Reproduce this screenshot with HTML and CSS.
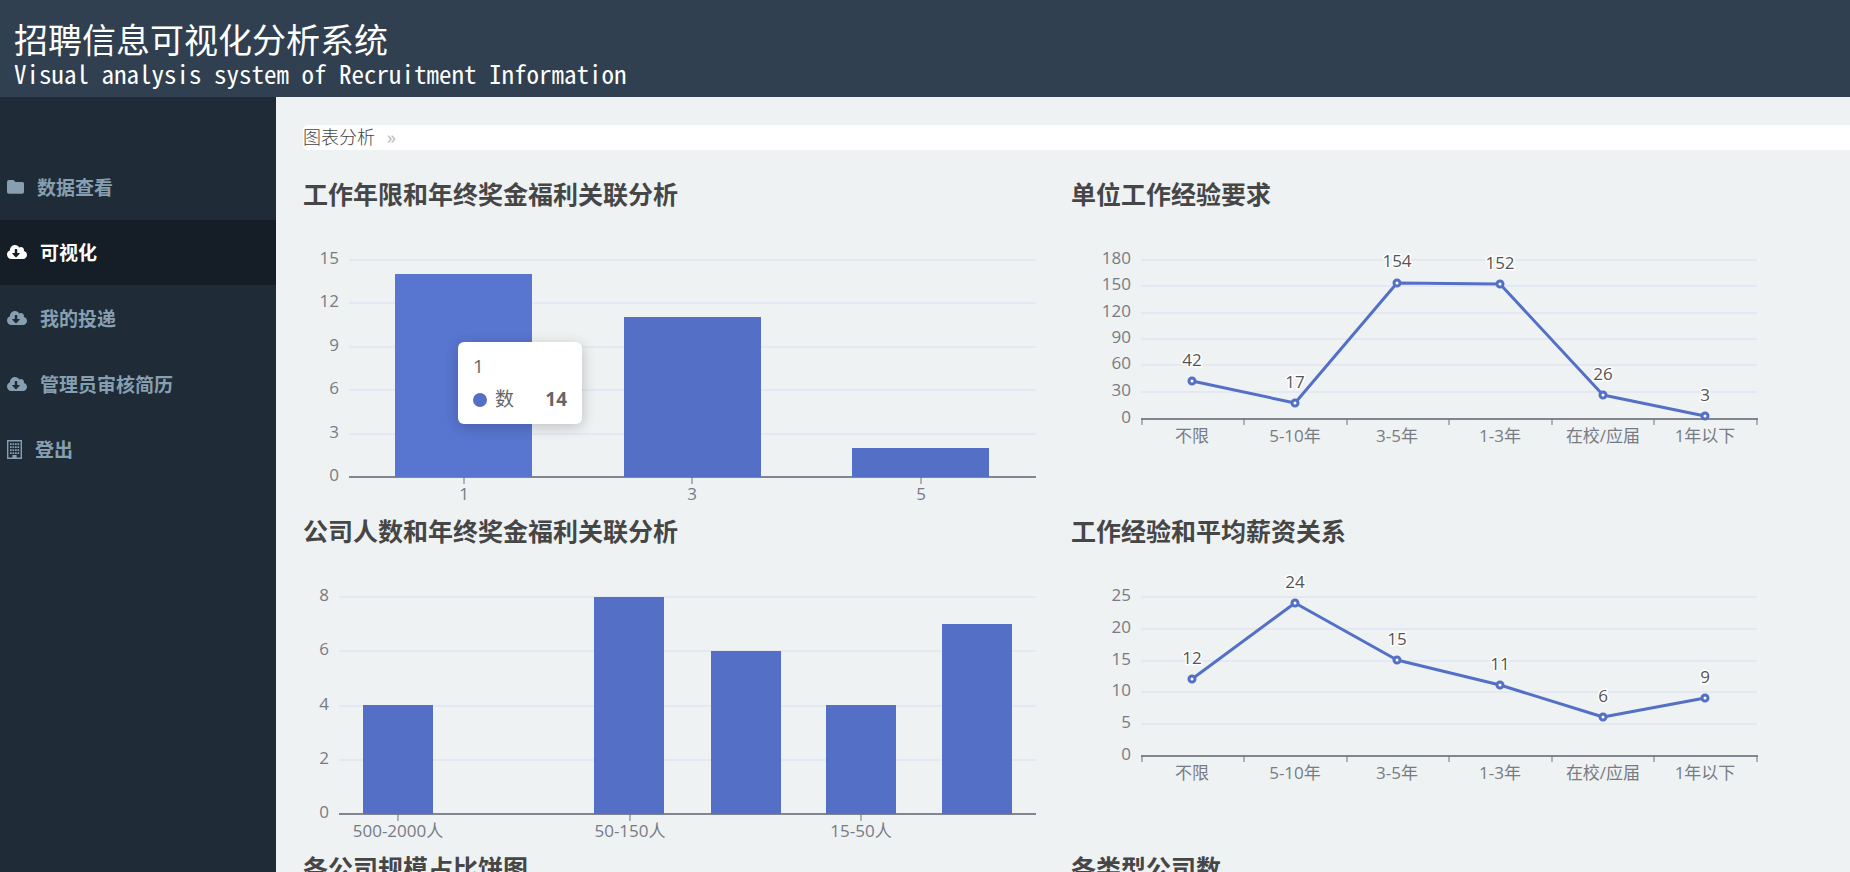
FILE: index.html
```html
<!DOCTYPE html>
<html lang="zh-CN">
<head>
<meta charset="utf-8">
<title>招聘信息可视化分析系统</title>
<link rel="stylesheet" href="styles.css">
</head>
<body>
<header class="banner">
  <h1 class="banner-title">招聘信息可视化分析系统</h1>
  <p class="banner-subtitle">Visual analysis system of Recruitment Information</p>
</header>
<div class="layout">
  <nav class="sidebar">
    <ul class="menu">
      <li><a class="menu-link" href="#"><svg class="icon" width="17" height="15" viewBox="0 0 17 15"><path d="M2 1h4.500l2 2H15.500a1.500 1.500 0 0 1 1.500 1.500V13a1.800 1.800 0 0 1-1.800 1.800H1.800A1.800 1.800 0 0 1 0 13V3a2 2 0 0 1 2-2z"/></svg><span>数据查看</span></a></li>
      <li><a class="menu-link active" href="#"><svg class="icon" width="20" height="16" viewBox="0 0 640 512"><path d="M537.600 226.600c4.100-10.700 6.400-22.400 6.400-34.600 0-53-43-96-96-96-19.700 0-38.100 6-53.300 16.200C367 64.200 315.300 32 256 32c-88.400 0-160 71.600-160 160 0 2.700.1 5.400.2 8.100C40.200 219.800 0 273.200 0 336c0 79.500 64.500 144 144 144h368c70.700 0 128-57.300 128-128 0-61.900-44-113.600-102.400-125.400zm-132.900 88.700L299.300 420.700c-6.200 6.200-16.400 6.200-22.600 0L171.300 315.300c-10.100-10.100-2.900-27.300 11.300-27.300H248V176c0-8.800 7.200-16 16-16h48c8.800 0 16 7.200 16 16v112h65.400c14.200 0 21.400 17.200 11.300 27.300z"/></svg><span>可视化</span></a></li>
      <li><a class="menu-link" href="#"><svg class="icon" width="20" height="16" viewBox="0 0 640 512"><path d="M537.600 226.600c4.100-10.700 6.400-22.400 6.400-34.600 0-53-43-96-96-96-19.700 0-38.100 6-53.300 16.200C367 64.200 315.300 32 256 32c-88.400 0-160 71.600-160 160 0 2.700.1 5.400.2 8.100C40.200 219.800 0 273.200 0 336c0 79.500 64.500 144 144 144h368c70.700 0 128-57.300 128-128 0-61.900-44-113.600-102.400-125.400zm-132.900 88.700L299.300 420.700c-6.200 6.200-16.400 6.200-22.600 0L171.300 315.300c-10.100-10.100-2.900-27.300 11.300-27.300H248V176c0-8.800 7.200-16 16-16h48c8.800 0 16 7.200 16 16v112h65.400c14.200 0 21.400 17.200 11.300 27.300z"/></svg><span>我的投递</span></a></li>
      <li><a class="menu-link" href="#"><svg class="icon" width="20" height="16" viewBox="0 0 640 512"><path d="M537.600 226.600c4.100-10.700 6.400-22.400 6.400-34.600 0-53-43-96-96-96-19.700 0-38.100 6-53.300 16.200C367 64.200 315.300 32 256 32c-88.400 0-160 71.600-160 160 0 2.700.1 5.400.2 8.100C40.200 219.800 0 273.200 0 336c0 79.500 64.500 144 144 144h368c70.700 0 128-57.300 128-128 0-61.900-44-113.600-102.400-125.400zm-132.900 88.700L299.300 420.700c-6.200 6.200-16.400 6.200-22.600 0L171.300 315.300c-10.100-10.100-2.900-27.300 11.300-27.300H248V176c0-8.800 7.200-16 16-16h48c8.800 0 16 7.200 16 16v112h65.400c14.200 0 21.400 17.200 11.300 27.300z"/></svg><span>管理员审核简历</span></a></li>
      <li><a class="menu-link" href="#"><svg class="icon" width="15" height="19" viewBox="0 0 15 19"><path d="M0 0h15v19H0zM1.400 1.400v16.200h4V15h4.200v2.600h4V1.400z" fill-rule="evenodd"/><path d="M3 4.200h9.200M3 7.200h9.200M3 10.200h9.200M3 13.200h9.200" stroke="currentColor" stroke-width="1.800" stroke-dasharray="1.700 0.800"/></svg><span>登出</span></a></li>
    </ul>
  </nav>
  <main class="content">
    <nav class="breadcrumb"><a class="crumb" href="#">图表分析</a><span class="crumb-sep">»</span></nav>
    <div class="charts">
      <section class="chart">
        <h2 class="chart-title">工作年限和年终奖金福利关联分析</h2>
        <svg class="plot" viewBox="0 0 768 301">
          <path class="grid" d="M46 47H733M46 90H733M46 134H733M46 177H733M46 221H733"/>
          <path class="axis" d="M46 264H733"/>
          <path class="tick" d="M161 264V271M389 264V271M618 264V271"/>
          <rect class="bar hover" x="92" y="61" width="137" height="203"/>
          <rect class="bar" x="321" y="104" width="137" height="160"/>
          <rect class="bar" x="549" y="235" width="137" height="29"/>
          <g class="y-label"><text x="36" y="51">15</text><text x="36" y="94">12</text><text x="36" y="138">9</text><text x="36" y="181">6</text><text x="36" y="225">3</text><text x="36" y="268">0</text></g>
          <g class="x-label"><text x="161" y="287">1</text><text x="389" y="287">3</text><text x="618" y="287">5</text></g>
        </svg>
        <div class="tooltip">
          <div>1</div>
          <div class="tooltip-row"><span class="dot"></span><span>数</span><b class="tooltip-value">14</b></div>
        </div>
      </section>
      <section class="chart">
        <h2 class="chart-title">单位工作经验要求</h2>
        <svg class="plot" viewBox="0 0 768 301">
          <path class="grid" d="M70 47H686M70 73H686M70 100H686M70 126H686M70 152H686M70 179H686"/>
          <path class="axis" d="M70 206H687"/>
          <path class="tick" d="M71 206V212M173 206V212M276 206V212M378 206V212M481 206V212M583 206V212M686 206V212"/>
          <polyline class="line" points="121,168 224,190 326,70 429,71 532,182 634,203"/>
          <g class="point"><circle cx="121" cy="168" r="3"/><circle cx="224" cy="190" r="3"/><circle cx="326" cy="70" r="3"/><circle cx="429" cy="71" r="3"/><circle cx="532" cy="182" r="3"/><circle cx="634" cy="203" r="3"/></g>
          <g class="value"><text x="121" y="153">42</text><text x="224" y="175">17</text><text x="326" y="54">154</text><text x="429" y="56">152</text><text x="532" y="167">26</text><text x="634" y="188">3</text></g>
          <g class="y-label"><text x="60" y="51">180</text><text x="60" y="77">150</text><text x="60" y="104">120</text><text x="60" y="130">90</text><text x="60" y="156">60</text><text x="60" y="183">30</text><text x="60" y="210">0</text></g>
          <g class="x-label"><text x="121" y="229">不限</text><text x="224" y="229">5-10年</text><text x="326" y="229">3-5年</text><text x="429" y="229">1-3年</text><text x="532" y="229">在校/应届</text><text x="634" y="229">1年以下</text></g>
        </svg>
      </section>
      <section class="chart">
        <h2 class="chart-title">公司人数和年终奖金福利关联分析</h2>
        <svg class="plot" viewBox="0 0 768 301">
          <path class="grid" d="M36 47H733M36 101H733M36 156H733M36 210H733"/>
          <path class="axis" d="M36 264H733"/>
          <path class="tick" d="M95 264V271M327 264V271M558 264V271"/>
          <rect class="bar" x="60" y="155" width="70" height="109"/>
          <rect class="bar" x="291" y="47" width="70" height="217"/>
          <rect class="bar" x="408" y="101" width="70" height="163"/>
          <rect class="bar" x="523" y="155" width="70" height="109"/>
          <rect class="bar" x="639" y="74" width="70" height="190"/>
          <g class="y-label"><text x="26" y="51">8</text><text x="26" y="105">6</text><text x="26" y="160">4</text><text x="26" y="214">2</text><text x="26" y="268">0</text></g>
          <g class="x-label"><text x="95" y="287">500-2000人</text><text x="327" y="287">50-150人</text><text x="558" y="287">15-50人</text></g>
        </svg>
      </section>
      <section class="chart">
        <h2 class="chart-title">工作经验和平均薪资关系</h2>
        <svg class="plot" viewBox="0 0 768 301">
          <path class="grid" d="M70 47H686M70 79H686M70 111H686M70 142H686M70 174H686"/>
          <path class="axis" d="M70 206H687"/>
          <path class="tick" d="M71 206V212M173 206V212M276 206V212M378 206V212M481 206V212M583 206V212M686 206V212"/>
          <polyline class="line" points="121,129 224,53 326,110 429,135 532,167 634,148"/>
          <g class="point"><circle cx="121" cy="129" r="3"/><circle cx="224" cy="53" r="3"/><circle cx="326" cy="110" r="3"/><circle cx="429" cy="135" r="3"/><circle cx="532" cy="167" r="3"/><circle cx="634" cy="148" r="3"/></g>
          <g class="value"><text x="121" y="114">12</text><text x="224" y="38">24</text><text x="326" y="95">15</text><text x="429" y="120">11</text><text x="532" y="152">6</text><text x="634" y="133">9</text></g>
          <g class="y-label"><text x="60" y="51">25</text><text x="60" y="83">20</text><text x="60" y="115">15</text><text x="60" y="146">10</text><text x="60" y="178">5</text><text x="60" y="210">0</text></g>
          <g class="x-label"><text x="121" y="229">不限</text><text x="224" y="229">5-10年</text><text x="326" y="229">3-5年</text><text x="429" y="229">1-3年</text><text x="532" y="229">在校/应届</text><text x="634" y="229">1年以下</text></g>
        </svg>
      </section>
      <section class="chart">
        <h2 class="chart-title">各公司规模占比饼图</h2>
      </section>
      <section class="chart">
        <h2 class="chart-title">各类型公司数</h2>
      </section>
    </div>
  </main>
</div>
</body>
</html>
```
FILE: styles.css
```css
* {
  box-sizing: border-box;
}

body {
  margin: 0;
  height: 100vh;
  display: flex;
  flex-direction: column;
  overflow: hidden;
  background: #eef2f3;
  color: #666;
  font-family: "Open Sans", "Noto Sans CJK SC", sans-serif;
}

a {
  color: inherit;
  text-decoration: none;
}

.banner {
  flex: none;
  padding: 20px 14px 10px;
  background: #304050;
  color: #fff;
}

.banner-title {
  margin: 0;
  font-size: 34px;
  font-weight: 400;
  line-height: 40px;
}

.banner-subtitle {
  margin: 0;
  font-family: "Noto Sans Mono CJK SC", "DejaVu Sans Mono", monospace;
  font-size: 25px;
  line-height: 27px;
}

.layout {
  flex: 1;
  min-height: 0;
  display: flex;
}

.sidebar {
  flex: none;
  width: 276px;
  padding-top: 57px;
  background: #1f2b36;
}

.menu {
  display: grid;
  grid-auto-rows: 1fr;
  height: 328px;
  margin: 0;
  padding: 0;
  list-style: none;
}

.menu-link {
  display: flex;
  align-items: center;
  gap: 13px;
  height: 100%;
  padding-left: 7px;
  color: #869fb1;
  font-size: 19px;
  font-weight: 700;
}

.menu-link.active {
  background: #151e26;
  color: #fff;
}

.icon {
  fill: currentColor;
}

.content {
  flex: 1;
  min-width: 0;
  padding: 28px 0 0 27px;
  overflow: hidden;
}

.breadcrumb {
  display: flex;
  gap: 12px;
  height: 25px;
  border-radius: 5px 0 0 5px;
  background: #fff;
  color: #444;
  font-size: 18px;
  font-weight: 300;
  line-height: 24px;
}

.crumb-sep {
  color: #bbb;
  font-weight: 400;
}

.charts {
  display: grid;
  grid-template-columns: 1fr 1fr;
  padding: 27px 11px 0 0;
}

.chart {
  position: relative;
}

.chart-title {
  margin: 0;
  padding-bottom: 2px;
  color: #464646;
  font-size: 25px;
  font-weight: 700;
  line-height: 34px;
}

.plot {
  display: block;
  width: 100%;
  font-size: 17px;
}

.grid {
  stroke: #e3e8f2;
  stroke-width: 2;
}

.axis {
  stroke: #82868e;
  stroke-width: 2;
}

.tick {
  stroke: #6e7079;
  stroke-width: 1;
}

.bar {
  fill: #5470c6;
}

.bar.hover {
  fill: #5875cf;
}

.line {
  fill: none;
  stroke: #5470c6;
  stroke-width: 3;
  stroke-linejoin: bevel;
}

.point {
  fill: #fff;
  stroke: #5470c6;
  stroke-width: 3;
}

.x-label {
  fill: #787b83;
  text-anchor: middle;
}

.y-label {
  fill: #787b83;
  text-anchor: end;
}

.value {
  fill: #555;
  stroke: #fff;
  stroke-width: 3;
  paint-order: stroke;
  text-anchor: middle;
}

.tooltip {
  position: absolute;
  left: 155px;
  top: 165px;
  width: 124px;
  padding: 8px 15px;
  border-radius: 6px;
  background: #fff;
  box-shadow: 1px 3px 14px rgba(0, 0, 0, 0.2);
  color: #666;
  font-size: 19px;
  line-height: 33px;
}

.tooltip-row {
  display: flex;
  align-items: center;
  gap: 8px;
}

.tooltip-value {
  margin-left: auto;
}

.dot {
  width: 14px;
  height: 14px;
  border-radius: 50%;
  background: #5470c6;
}
```
